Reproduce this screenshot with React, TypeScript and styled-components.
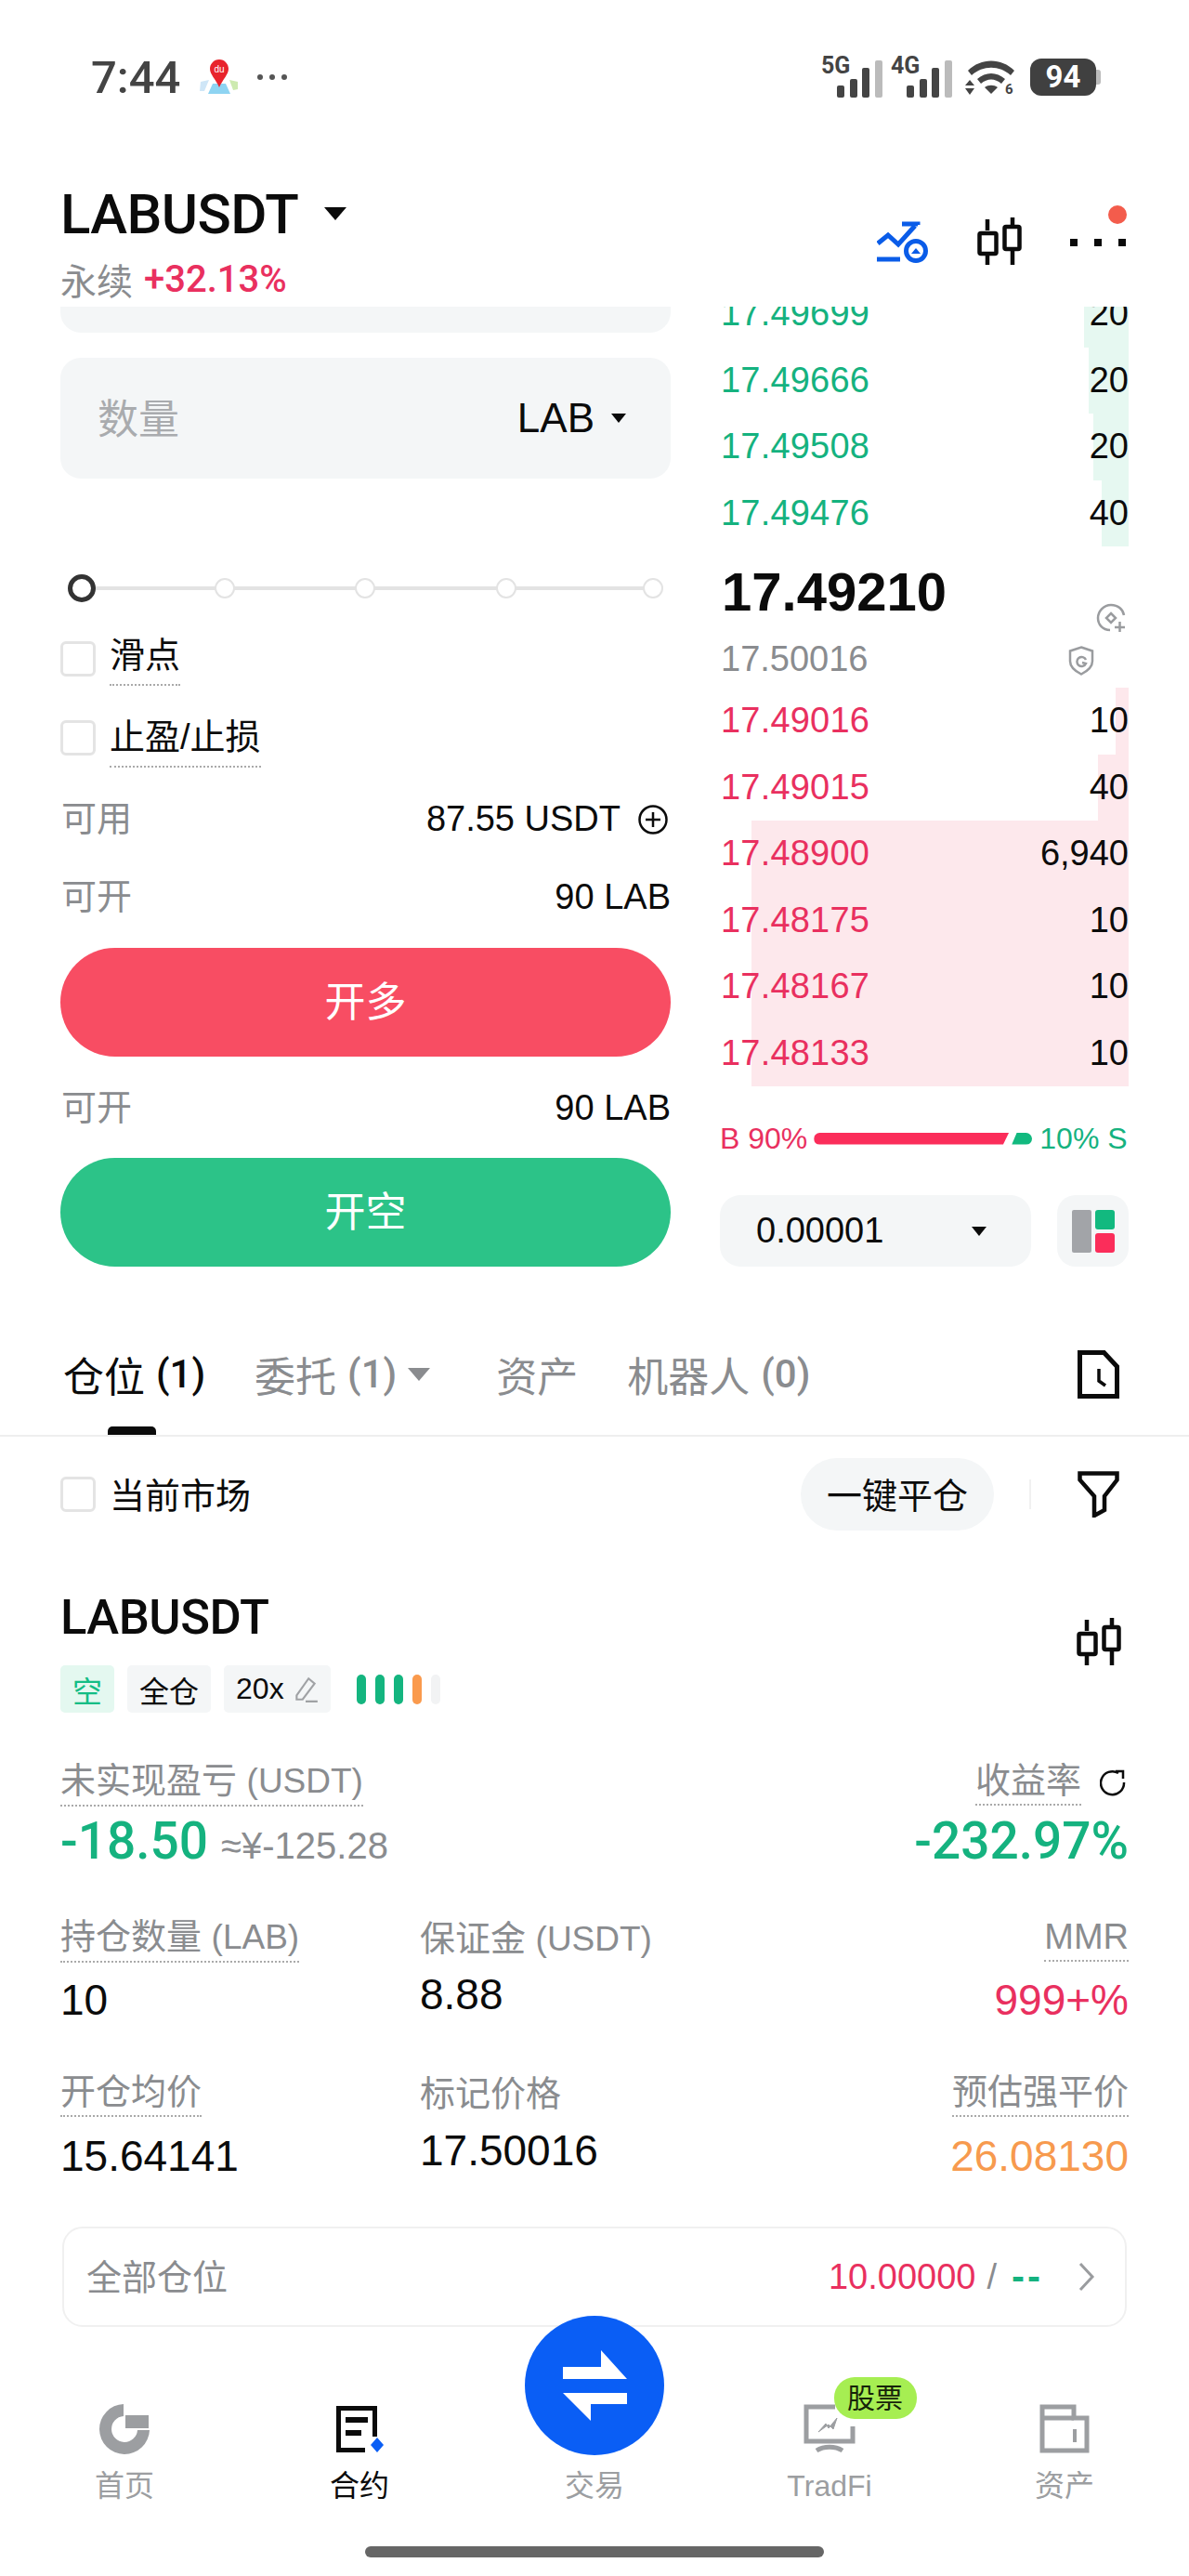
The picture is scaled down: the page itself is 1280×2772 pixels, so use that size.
import styled, { createGlobalStyle } from 'styled-components'

const GREEN = '#15b27f'
const RED = '#e9305f'
const GRAY = '#8a8c8f'
const FIELD = '#f4f6f7'

const GlobalStyle = createGlobalStyle`
  html, body {
    margin: 0;
    padding: 0;
    background: #fff;
  }
  * {
    box-sizing: border-box;
  }
`

const Page = styled.div`
  position: relative;
  width: 1280px;
  height: 2772px;
  overflow: hidden;
  background: #fff;
  color: #0b0b0b;
  font-family: 'Liberation Sans', 'Noto Sans CJK SC', sans-serif;
  font-size: 38px;
`

/* status bar */
const StatusBar = styled.div`
  height: 166px;
  padding: 0 96px 0 98px;
  display: flex;
  align-items: center;
  justify-content: space-between;
`

const StatusLeft = styled.div`
  display: flex;
  align-items: center;
`

const Clock = styled.div`
  font-family: Roboto, sans-serif;
  font-weight: 500;
  font-size: 49px;
  color: #444;
  margin-right: 21px;
`

const StatusDots = styled.div`
  display: flex;
  gap: 7px;
  margin-left: 20px;
  span {
    width: 6px;
    height: 6px;
    border-radius: 50%;
    background: #555;
  }
`

const StatusRight = styled.div`
  display: flex;
  align-items: center;
  gap: 14px;
`

const CellGroup = styled.div`
  display: flex;
  gap: 9px;
  margin-bottom: 6px;
`

const Battery = styled.div`
  position: relative;
  width: 71px;
  height: 40px;
  margin-right: 4px;
  border-radius: 12px;
  background: #404040;
  color: #fff;
  font-family: Roboto, sans-serif;
  font-weight: 700;
  font-size: 33px;
  line-height: 40px;
  text-align: center;
  &::after {
    content: '';
    position: absolute;
    right: -5px;
    top: 12px;
    width: 5px;
    height: 16px;
    border-radius: 0 3px 3px 0;
    background: #bbb;
  }
`

/* symbol header */
const Header = styled.div`
  height: 164px;
  padding: 34px 65px 0;
  display: flex;
  justify-content: space-between;
  align-items: flex-start;
`

const TitleRow = styled.div`
  display: flex;
  align-items: center;
  height: 60px;
  gap: 28px;
`

const Title = styled.div`
  font-family: Roboto, sans-serif;
  font-weight: 500;
  font-size: 60px;
  letter-spacing: -0.6px;
`

const Caret = styled.span<{ $size: number; $color?: string; $after?: number }>`
  display: inline-block;
  width: 0;
  height: 0;
  margin-right: ${(p) => p.$after ?? 0}px;
  border-left: ${(p) => p.$size}px solid transparent;
  border-right: ${(p) => p.$size}px solid transparent;
  border-top: ${(p) => Math.round(p.$size * 1.2)}px solid ${(p) => p.$color ?? '#0b0b0b'};
`

const SubRow = styled.div`
  display: flex;
  align-items: center;
  margin-top: 15px;
  height: 50px;
  gap: 12px;
  font-size: 39px;
`

const Muted = styled.span`
  color: ${GRAY};
`

const Change = styled.span`
  color: ${RED};
  font-family: Roboto, sans-serif;
  font-weight: 500;
  font-size: 40px;
`

const HeaderIcons = styled.div`
  display: flex;
  align-items: center;
  gap: 52px;
  margin-top: 34px;
  margin-right: -2px;
`

const MoreDots = styled.div`
  position: relative;
  display: flex;
  gap: 18px;
  margin-right: 5px;
  span {
    width: 8px;
    height: 8px;
    background: #0b0b0b;
  }
  &::after {
    content: '';
    position: absolute;
    right: -1px;
    top: -36px;
    width: 20px;
    height: 20px;
    border-radius: 50%;
    background: #f35c4c;
  }
`

/* trade area */
const Market = styled.div`
  height: 1033px;
  padding: 0 65px;
  overflow: hidden;
  display: grid;
  grid-template-columns: 657px 440px;
  column-gap: 53px;
`

const OrderForm = styled.div`
  display: flex;
  flex-direction: column;
`

const FieldStub = styled.div`
  height: 28px;
  border-radius: 0 0 22px 22px;
  background: ${FIELD};
`

const QtyField = styled.div`
  height: 130px;
  margin-top: 27px;
  padding: 0 48px 0 40px;
  border-radius: 22px;
  background: ${FIELD};
  display: flex;
  align-items: center;
  justify-content: space-between;
  font-size: 44px;
  color: #a9abae;
`

const QtyHint = styled.span`
  margin-top: -5px;
`

const QtyUnit = styled.div`
  display: flex;
  align-items: center;
  gap: 18px;
  color: #0b0b0b;
`

const Slider = styled.div`
  position: relative;
  height: 30px;
  margin-top: 103px;
  &::before {
    content: '';
    position: absolute;
    left: 23px;
    right: 19px;
    top: 13px;
    height: 4px;
    background: #e3e3e3;
  }
`

const SliderNode = styled.span<{ $left: number; $active?: boolean }>`
  position: absolute;
  left: ${(p) => p.$left}px;
  top: ${(p) => (p.$active ? 0 : 4)}px;
  width: ${(p) => (p.$active ? 30 : 22)}px;
  height: ${(p) => (p.$active ? 30 : 22)}px;
  border-radius: 50%;
  background: #fff;
  border: ${(p) => (p.$active ? '5px solid #333' : '2px solid #e3e3e3')};
`

const CheckRow = styled.div<{ $top: number }>`
  display: flex;
  align-items: flex-start;
  gap: 15px;
  margin-top: ${(p) => p.$top}px;
`

const CheckBox = styled.span`
  width: 38px;
  height: 38px;
  border: 3px solid #e4e4e4;
  border-radius: 6px;
  background: #fff;
  flex: none;
`

const Dotted = styled.span`
  display: inline-block;
  line-height: 46px;
  padding-bottom: 2px;
  border-bottom: 2px dotted #aaa;
  white-space: nowrap;
`

const CheckLabel = styled(Dotted)<{ $lift: number }>`
  margin-top: -${(p) => p.$lift}px;
  padding-bottom: 8px;
`

const InfoRow = styled.div<{ $top: number }>`
  display: flex;
  justify-content: space-between;
  align-items: center;
  height: 46px;
  margin-top: ${(p) => p.$top}px;
  padding-left: 1px;
`

const InfoLabel = styled(Muted)`
  margin-top: -3px;
`

const InfoValue = styled.span`
  display: flex;
  align-items: center;
  gap: 19px;
  margin-top: 5px;
  font-size: 38px;
  svg {
    margin-right: 3px;
  }
`

const TradeButton = styled.div<{ $bg: string; $top: number }>`
  height: 117px;
  margin-top: ${(p) => p.$top}px;
  padding-bottom: 8px;
  border-radius: 59px;
  background: ${(p) => p.$bg};
  color: #fff;
  font-size: 44px;
  display: flex;
  align-items: center;
  justify-content: center;
`

/* order book */
const Book = styled.div`
  display: flex;
  flex-direction: column;
  min-width: 0;
`

const BookSide = styled.div<{ $shift?: number }>`
  margin-top: ${(p) => p.$shift ?? 0}px;
`

const BookRow = styled.div<{ $color: string }>`
  position: relative;
  height: 71.5px;
  display: flex;
  align-items: center;
  justify-content: space-between;
  color: ${(p) => p.$color};
  font-size: 38px;
  span {
    position: relative;
  }
  span:first-of-type {
    margin-left: 1px;
    letter-spacing: 0.2px;
  }
  span:last-child {
    color: #0b0b0b;
  }
`

const DepthBar = styled.i<{ $tint: string }>`
  position: absolute;
  top: 0;
  bottom: 0;
  right: 0;
  background: ${(p) => p.$tint};
`

const MidBlock = styled.div`
  position: relative;
  height: 152px;
  padding-top: 17px;
`

const MidPrice = styled.div`
  margin-left: 2px;
  font-size: 58px;
  font-weight: 700;
  line-height: 64px;
`

const MarkPrice = styled.div`
  margin-top: 18px;
  margin-left: 1px;
  font-size: 38px;
  line-height: 44px;
  color: ${GRAY};
`

const MidIcon = styled.div<{ $right: number; $top: number }>`
  position: absolute;
  right: ${(p) => p.$right}px;
  top: ${(p) => p.$top}px;
  line-height: 0;
`

const RatioRow = styled.div`
  display: flex;
  align-items: center;
  height: 40px;
  margin-top: 36px;
  font-size: 32px;
  white-space: nowrap;
`

const RatioLabel = styled.span<{ $color: string }>`
  color: ${(p) => p.$color};
  flex: none;
`

const BuyBar = styled.span`
  width: 210px;
  height: 13px;
  margin-left: 7px;
  background: #fb2d5a;
  border-radius: 7px 0 0 7px;
  clip-path: polygon(0 0, 100% 0, 97% 100%, 0 100%);
`

const SellBar = styled.span`
  width: 22px;
  height: 13px;
  margin: 0 8px 0 3px;
  background: #12b97f;
  border-radius: 0 7px 7px 0;
  clip-path: polygon(25% 0, 100% 0, 100% 100%, 0 100%);
`

const BookTools = styled.div`
  display: flex;
  justify-content: space-between;
  margin-top: 41px;
`

const PrecisionSelect = styled.div`
  width: 335px;
  height: 77px;
  padding: 0 48px 0 39px;
  border-radius: 22px;
  background: ${FIELD};
  display: flex;
  align-items: center;
  justify-content: space-between;
  font-size: 38px;
`

const LayoutButton = styled.div`
  width: 77px;
  height: 77px;
  border-radius: 20px;
  background: ${FIELD};
  display: flex;
  align-items: center;
  justify-content: center;
`

/* tabs */
const Tabs = styled.div`
  position: relative;
  height: 183px;
  padding: 87px 75px 0 68px;
  border-bottom: 2px solid #eeeeee;
  display: flex;
  justify-content: space-between;
  align-items: flex-start;
`

const TabList = styled.div`
  display: flex;
  gap: 53px;
  height: 60px;
  align-items: center;
`

const Tab = styled.div<{ $active?: boolean }>`
  position: relative;
  display: flex;
  align-items: center;
  gap: 12px;
  font-size: 44px;
  margin-top: -3px;
  color: ${(p) => (p.$active ? '#0b0b0b' : GRAY)};
  small {
    font-family: Roboto, sans-serif;
    font-size: 42px;
    font-weight: 500;
  }
  ${(p) =>
    p.$active &&
    `&::after {
      content: '';
      position: absolute;
      left: 48px;
      top: 88px;
      width: 52px;
      height: 9px;
      border-radius: 5px 5px 0 0;
      background: #0b0b0b;
    }`}
`

const TabsIcon = styled.svg`
  margin-top: 3px;
`

/* positions */
const FilterRow = styled.div`
  height: 124px;
  padding: 0 75px 0 65px;
  display: flex;
  align-items: center;
`

const FilterLabel = styled.div`
  margin: -4px 0 0 15px;
  flex: 1;
`

const CloseAll = styled.div`
  width: 208px;
  height: 78px;
  padding-bottom: 3px;
  border-radius: 39px;
  background: ${FIELD};
  font-size: 38px;
  display: flex;
  align-items: center;
  justify-content: center;
`

const Separator = styled.span`
  width: 2px;
  height: 32px;
  margin: 0 50px 0 38px;
  background: #f1f1f1;
`

const Position = styled.div`
  padding: 42px 65px 0;
`

const PositionHead = styled.div`
  display: flex;
  justify-content: space-between;
  align-items: flex-start;
`

const PositionChart = styled.div`
  margin: 29px 8px 0 0;
`

const PositionTitle = styled.div`
  font-family: Roboto, sans-serif;
  font-weight: 500;
  font-size: 52.5px;
  line-height: 56px;
  letter-spacing: -0.5px;
`

const Tags = styled.div`
  display: flex;
  align-items: center;
  gap: 14px;
  margin-top: 24px;
`

const Tag = styled.span<{ $green?: boolean }>`
  height: 51px;
  padding: 0 13px;
  border-radius: 5px;
  background: ${(p) => (p.$green ? '#e4f8f0' : FIELD)};
  color: ${(p) => (p.$green ? '#13bd85' : '#0b0b0b')};
  font-size: 32px;
  display: flex;
  align-items: center;
  gap: 9px;
`

const Risk = styled.div`
  display: flex;
  gap: 10px;
  margin-left: 14px;
`

const RiskBar = styled.span<{ $color: string }>`
  width: 10px;
  height: 32px;
  border-radius: 5px;
  background: ${(p) => p.$color};
`

const MetricGrid = styled.div<{ $top: number; $columns?: string }>`
  display: grid;
  grid-template-columns: ${(p) => p.$columns ?? '387px 1fr auto'};
  margin-top: ${(p) => p.$top}px;
  line-height: 1;
`

const Metric = styled.div<{ $end?: boolean }>`
  display: flex;
  flex-direction: column;
  align-items: ${(p) => (p.$end ? 'flex-end' : 'flex-start')};
`

const MetricLabel = styled.div`
  display: flex;
  align-items: center;
  gap: 20px;
  color: ${GRAY};
  font-size: 38px;
  height: 50px;
  small {
    font-size: 37px;
  }
  svg {
    margin-right: 3px;
  }
`

const Value = styled.div<{ $color?: string; $drop?: number }>`
  margin-top: ${(p) => p.$drop ?? 0}px;
  font-size: 46px;
  line-height: 52px;
  color: ${(p) => p.$color ?? '#0b0b0b'};
`

const BigValue = styled.div<{ $color: string }>`
  display: flex;
  align-items: baseline;
  margin-top: 9px;
  font-family: Roboto, sans-serif;
  font-weight: 500;
  font-size: 55px;
  line-height: 58px;
  color: ${(p) => p.$color};
`

const FiatValue = styled.span`
  margin-left: 14px;
  font-family: 'Liberation Sans', sans-serif;
  font-weight: 400;
  font-size: 40px;
  color: ${GRAY};
`

const AllPositions = styled.div`
  height: 108px;
  margin: 50px 2px 0;
  padding: 0 32px 0 24px;
  border: 2px solid #f0f0f0;
  border-radius: 22px;
  display: flex;
  align-items: center;
  justify-content: space-between;
  color: ${GRAY};
`

const AllTitle = styled.span`
  margin-top: -6px;
`

const AllValues = styled.div`
  display: flex;
  align-items: center;
  font-size: 38px;
  gap: 12px;
  svg {
    margin-left: 26px;
  }
`

const AllLong = styled.span`
  color: ${RED};
`

const AllShort = styled.span`
  margin-left: 4px;
  color: ${GREEN};
  font-weight: 700;
  font-size: 42px;
  letter-spacing: 3px;
`

/* bottom navigation */
const Nav = styled.div`
  position: relative;
  height: 180px;
  margin-top: 57px;
  padding: 26px 7px 0;
  display: grid;
  grid-template-columns: repeat(5, 253px);
  justify-content: center;
`

const NavItem = styled.div<{ $active?: boolean }>`
  position: relative;
  display: flex;
  flex-direction: column;
  align-items: center;
  color: ${(p) => (p.$active ? '#0b0b0b' : '#9c9ea1')};
  font-size: 32px;
  line-height: 40px;
  svg {
    height: 54px;
  }
`

const NavIconSlot = styled.div`
  height: 54px;
  margin-bottom: 14px;
`

const TradeCircle = styled.div`
  position: absolute;
  left: 565px;
  top: -69px;
  width: 150px;
  height: 150px;
  border-radius: 50%;
  background: #0a5ef5;
  display: flex;
  align-items: center;
  justify-content: center;
`

const StockBadge = styled.span`
  position: absolute;
  left: 131px;
  top: -29px;
  width: 89px;
  height: 45px;
  border-radius: 22px;
  background: #a6ee52;
  color: #17240a;
  font-size: 30px;
  line-height: 45px;
  text-align: center;
`

const HomeBar = styled.div`
  position: absolute;
  left: 393px;
  bottom: 20px;
  width: 494px;
  height: 12px;
  border-radius: 6px;
  background: #666;
`

const CandleIcon = () => (
  <svg width="48" height="53" viewBox="0 0 48 53" fill="none" stroke="#0b0b0b" strokeWidth="4.500">
    <path d="M11 2v12M11 38v13M38 0v10M38 35v16" />
    <rect x="2.500" y="17" width="18" height="22" rx="1.500" />
    <rect x="29.500" y="10" width="16" height="24" rx="1.500" />
  </svg>
)

const CellBars = ({ label }: { label: string }) => (
  <svg width="66" height="52" viewBox="0 -6 66 52">
    <text x="0" y="19" fontFamily="Roboto, sans-serif" fontWeight="700" fontSize="25" fill="#444">
      {label}
    </text>
    <rect x="17" y="32" width="8" height="13" rx="2" fill="#444" />
    <rect x="31" y="25" width="8" height="20" rx="2" fill="#444" />
    <rect x="44" y="13" width="8" height="32" rx="2" fill="#444" />
    <rect x="58" y="5" width="8" height="40" rx="2" fill="#bbb" />
  </svg>
)

const bids = [
  { price: '17.49699', qty: '20', depth: 48 },
  { price: '17.49666', qty: '20', depth: 43 },
  { price: '17.49508', qty: '20', depth: 38 },
  { price: '17.49476', qty: '40', depth: 29 },
]

const asks = [
  { price: '17.49016', qty: '10', depth: 14 },
  { price: '17.49015', qty: '40', depth: 33 },
  { price: '17.48900', qty: '6,940', depth: 406 },
  { price: '17.48175', qty: '10', depth: 406 },
  { price: '17.48167', qty: '10', depth: 406 },
  { price: '17.48133', qty: '10', depth: 406 },
]

export default function App() {
  return (
    <Page>
      <GlobalStyle />
      <StatusBar>
        <StatusLeft>
          <Clock>7:44</Clock>
          <svg width="42" height="38" viewBox="0 0 42 38">
            <path d="M1 24l9-2-5 12-5 0z" fill="#cfe6f7" />
            <path d="M41 24l-9-2 4 11 5-1z" fill="#cdeab0" />
            <path d="M14 26h14l5 11H9z" fill="#8ed4f2" />
            <path d="M21 0c6 0 10 5 10 10 0 6-6 11-10 20-4-9-10-14-10-20C11 5 15 0 21 0z" fill="#e8242c" />
            <text x="21" y="14" textAnchor="middle" fontSize="10" fontFamily="Liberation Sans" fill="#fff">
              du
            </text>
          </svg>
          <StatusDots>
            <span />
            <span />
            <span />
          </StatusDots>
        </StatusLeft>
        <StatusRight>
          <CellGroup>
            <CellBars label="5G" />
            <CellBars label="4G" />
          </CellGroup>
          <svg width="56" height="42" viewBox="0 0 56 42">
            <path d="M3 14C17 0 39 0 53 14l-4 5C37 8 19 8 7 19z" fill="#444" />
            <path d="M13 23c9-8 21-8 30 0l-4 5c-7-6-15-6-22 0z" fill="#444" />
            <path d="M21 32c4-3 10-3 14 0l-7 7z" fill="#444" />
            <path d="M5 24l5 6H0zM5 40l5-7H0z" fill="#444" />
            <text x="43" y="39" fontFamily="Roboto, sans-serif" fontWeight="700" fontSize="15" fill="#444">
              6
            </text>
          </svg>
          <Battery>94</Battery>
        </StatusRight>
      </StatusBar>

      <Header>
        <div>
          <TitleRow>
            <Title>LABUSDT</Title>
            <Caret $size={12} />
          </TitleRow>
          <SubRow>
            <Muted>永续</Muted>
            <Change>+32.13%</Change>
          </SubRow>
        </div>
        <HeaderIcons>
          <svg width="56" height="46" viewBox="0 0 56 46" fill="none" stroke="#0a5ce8" strokeWidth="5">
            <path d="M1 24l11-9 11 10L41 5" />
            <path d="M27 3h17v1" />
            <path d="M0 41h25" />
            <circle cx="42" cy="32" r="10.500" />
            <path d="M37 35h10l-5-6z" fill="#0a5ce8" stroke="none" />
          </svg>
          <CandleIcon />
          <MoreDots>
            <span />
            <span />
            <span />
          </MoreDots>
        </HeaderIcons>
      </Header>

      <Market>
        <OrderForm>
          <FieldStub />
          <QtyField>
            <QtyHint>数量</QtyHint>
            <QtyUnit>
              LAB
              <Caret $size={8} />
            </QtyUnit>
          </QtyField>
          <Slider>
            <SliderNode $left={8} $active />
            <SliderNode $left={166} />
            <SliderNode $left={317} />
            <SliderNode $left={469} />
            <SliderNode $left={627} />
          </Slider>
          <CheckRow $top={42}>
            <CheckBox />
            <CheckLabel $lift={8}>滑点</CheckLabel>
          </CheckRow>
          <CheckRow $top={37}>
            <CheckBox />
            <CheckLabel $lift={5}>止盈/止损</CheckLabel>
          </CheckRow>
          <InfoRow $top={30}>
            <InfoLabel>可用</InfoLabel>
            <InfoValue>
              87.55 USDT
              <svg width="32" height="32" viewBox="0 0 32 32" fill="none" stroke="#0b0b0b" strokeWidth="2.500">
                <circle cx="16" cy="16" r="14.500" />
                <path d="M8 16h16M16 8v16" />
              </svg>
            </InfoValue>
          </InfoRow>
          <InfoRow $top={38}>
            <InfoLabel>可开</InfoLabel>
            <InfoValue>90 LAB</InfoValue>
          </InfoRow>
          <TradeButton $bg="#f84d63" $top={34}>
            开多
          </TradeButton>
          <InfoRow $top={30}>
            <InfoLabel>可开</InfoLabel>
            <InfoValue>90 LAB</InfoValue>
          </InfoRow>
          <TradeButton $bg="#2cc388" $top={33}>
            开空
          </TradeButton>
        </OrderForm>

        <Book>
          <BookSide $shift={-28}>
            {bids.map((row) => (
              <BookRow key={row.price} $color={GREEN}>
                <DepthBar $tint="#e6f8f1" style={{ width: row.depth }} />
                <span>{row.price}</span>
                <span>{row.qty}</span>
              </BookRow>
            ))}
          </BookSide>
          <MidBlock>
            <MidPrice>17.49210</MidPrice>
            <MarkPrice>17.50016</MarkPrice>
            <MidIcon $right={3} $top={61}>
              <svg width="32" height="32" viewBox="0 0 32 32" fill="none" stroke="#9a9c9f" strokeWidth="2.500">
                <path d="M15 29C7 29 2 23 2 16S8 2 16 2s13 5 14 11" />
                <path d="M16 11l5 5-5 5-5-5z" />
                <path d="M20 26h11M25.500 20v11" />
              </svg>
            </MidIcon>
            <MidIcon $right={37} $top={107}>
              <svg width="28" height="32" viewBox="0 0 28 32" fill="none" stroke="#9a9c9f" strokeWidth="2.500">
                <path d="M14 1.500l12 4v11c0 7-6 11-12 14C8 27.500 2 23.500 2 16.500v-11z" />
                <path d="M19 15a5 5 0 1 0 0 4l-4-1" />
              </svg>
            </MidIcon>
          </MidBlock>
          <BookSide>
            {asks.map((row) => (
              <BookRow key={row.price} $color={RED}>
                <DepthBar $tint="#fde8ec" style={{ width: row.depth }} />
                <span>{row.price}</span>
                <span>{row.qty}</span>
              </BookRow>
            ))}
          </BookSide>
          <RatioRow>
            <RatioLabel $color={RED}>B 90%</RatioLabel>
            <BuyBar />
            <SellBar />
            <RatioLabel $color={GREEN}>10% S</RatioLabel>
          </RatioRow>
          <BookTools>
            <PrecisionSelect>
              0.00001
              <Caret $size={8} />
            </PrecisionSelect>
            <LayoutButton>
              <svg width="46" height="46" viewBox="0 0 46 46">
                <rect x="0" y="0" width="21" height="46" rx="2" fill="#a2a4a8" />
                <rect x="25" y="0" width="21" height="21" rx="3" fill="#12b97f" />
                <rect x="25" y="25" width="21" height="21" rx="3" fill="#fb2d5a" />
              </svg>
            </LayoutButton>
          </BookTools>
        </Book>
      </Market>

      <Tabs>
        <TabList>
          <Tab $active>
            仓位<small>(1)</small>
          </Tab>
          <Tab>
            委托<small>(1)</small>
            <Caret $size={12} $color={GRAY} $after={18} />
          </Tab>
          <Tab>资产</Tab>
          <Tab>
            机器人<small>(0)</small>
          </Tab>
        </TabList>
        <TabsIcon width="45" height="52" viewBox="0 0 45 52" fill="none" stroke="#0b0b0b" strokeWidth="5">
          <path d="M2.500 2.500h26l14 15v32h-40z" />
          <path d="M23 20v13l7 5" strokeWidth="3.500" />
        </TabsIcon>
      </Tabs>

      <FilterRow>
        <CheckBox />
        <FilterLabel>当前市场</FilterLabel>
        <CloseAll>一键平仓</CloseAll>
        <Separator />
        <svg width="45" height="50" viewBox="0 0 45 50" fill="none" stroke="#0b0b0b" strokeWidth="4.500">
          <path d="M2.500 2.500h40v7L29 27v15l-11 6V27L2.500 9.500z" />
        </svg>
      </FilterRow>

      <Position>
        <PositionHead>
          <div>
            <PositionTitle>LABUSDT</PositionTitle>
            <Tags>
              <Tag $green>空</Tag>
              <Tag>全仓</Tag>
              <Tag>
                20x
                <svg width="28" height="30" viewBox="0 0 24 28" fill="none" stroke="#a0a2a5" strokeWidth="2">
                  <path d="M3 20L15 3l6 5L9 24H3zM12 26h12" />
                </svg>
              </Tag>
              <Risk>
                <RiskBar $color="#14b57f" />
                <RiskBar $color="#14b57f" />
                <RiskBar $color="#14b57f" />
                <RiskBar $color="#fa9a4d" />
                <RiskBar $color="#f2f3f4" />
              </Risk>
            </Tags>
          </div>
          <PositionChart>
            <CandleIcon />
          </PositionChart>
        </PositionHead>

        <MetricGrid $top={50} $columns="1fr auto">
          <Metric>
            <MetricLabel>
              <Dotted>
                未实现盈亏 <small>(USDT)</small>
              </Dotted>
            </MetricLabel>
            <BigValue $color={GREEN}>
              -18.50<FiatValue>≈¥-125.28</FiatValue>
            </BigValue>
          </Metric>
          <Metric $end>
            <MetricLabel>
              <Dotted>收益率</Dotted>
              <svg width="28" height="30" viewBox="0 0 28 30" fill="none" stroke="#0b0b0b" strokeWidth="2.500">
                <path d="M20 5a12.500 12.500 0 1 0 6 10M17 3h8v8" />
              </svg>
            </MetricLabel>
            <BigValue $color={GREEN}>-232.97%</BigValue>
          </Metric>
        </MetricGrid>

        <MetricGrid $top={46}>
          <Metric>
            <MetricLabel>
              <Dotted>
                持仓数量 <small>(LAB)</small>
              </Dotted>
            </MetricLabel>
            <Value $drop={15}>10</Value>
          </Metric>
          <Metric>
            <MetricLabel>
              <span>
                保证金 <small>(USDT)</small>
              </span>
            </MetricLabel>
            <Value $drop={9}>8.88</Value>
          </Metric>
          <Metric $end>
            <MetricLabel>
              <Dotted>MMR</Dotted>
            </MetricLabel>
            <Value $color={RED} $drop={15}>
              999+%
            </Value>
          </Metric>
        </MetricGrid>

        <MetricGrid $top={50}>
          <Metric>
            <MetricLabel>
              <Dotted>开仓均价</Dotted>
            </MetricLabel>
            <Value $drop={16}>15.64141</Value>
          </Metric>
          <Metric>
            <MetricLabel>
              <span>标记价格</span>
            </MetricLabel>
            <Value $drop={10}>17.50016</Value>
          </Metric>
          <Metric $end>
            <MetricLabel>
              <Dotted>预估强平价</Dotted>
            </MetricLabel>
            <Value $color="#f79a4e" $drop={16}>
              26.08130
            </Value>
          </Metric>
        </MetricGrid>

        <AllPositions>
          <AllTitle>全部仓位</AllTitle>
          <AllValues>
            <AllLong>10.00000</AllLong>
            <span>/</span>
            <AllShort>--</AllShort>
            <svg width="18" height="32" viewBox="0 0 18 32" fill="none" stroke="#9a9c9f" strokeWidth="3">
              <path d="M2 2l13 14L2 30" />
            </svg>
          </AllValues>
        </AllPositions>
      </Position>

      <Nav>
        <NavItem>
          <NavIconSlot>
            <svg width="54" height="54" viewBox="0 0 54 54" fill="#9c9ea1">
              <path d="M26 0v13a14 14 0 1 0 15 15h13A27 27 0 1 1 26 0z" />
              <rect x="28" y="12" width="25" height="14" />
            </svg>
          </NavIconSlot>
          首页
        </NavItem>
        <NavItem $active>
          <NavIconSlot>
            <svg width="54" height="54" viewBox="0 0 54 54">
              <path d="M2 2h44v33h-5V7H7v40h26v5H2z" fill="#0b0b0b" />
              <rect x="12" y="14" width="24" height="6" fill="#0b0b0b" />
              <rect x="12" y="28" width="17" height="6" fill="#0b0b0b" />
              <path d="M46 36l7 8-7 8-7-8z" fill="#0a5ef5" />
            </svg>
          </NavIconSlot>
          合约
        </NavItem>
        <NavItem>
          <NavIconSlot />
          交易
        </NavItem>
        <NavItem>
          <NavIconSlot>
            <svg width="56" height="54" viewBox="0 0 56 54" fill="none" stroke="#9c9ea1" strokeWidth="5">
              <path d="M34 3H3v37h50V24" />
              <path d="M14 50c8-5 20-5 28 0" />
              <path d="M16 30l8-9 3 5 9-11-4 12-5-5z" fill="#9c9ea1" strokeWidth="1" />
            </svg>
          </NavIconSlot>
          TradFi
          <StockBadge>股票</StockBadge>
        </NavItem>
        <NavItem>
          <NavIconSlot>
            <svg width="54" height="54" viewBox="0 0 54 54" fill="none" stroke="#9c9ea1" strokeWidth="5">
              <path d="M3 50V3h34v12h14v35z" />
              <path d="M3 15h34" />
              <path d="M38 27v14" strokeWidth="4" />
            </svg>
          </NavIconSlot>
          资产
        </NavItem>
        <TradeCircle>
          <svg width="69" height="76" viewBox="0 0 69 76" fill="#fff">
            <path d="M0 18h41V0l28 31H0z" />
            <path d="M69 46v12H30v18L0 46z" />
          </svg>
        </TradeCircle>
      </Nav>
      <HomeBar />
    </Page>
  )
}
